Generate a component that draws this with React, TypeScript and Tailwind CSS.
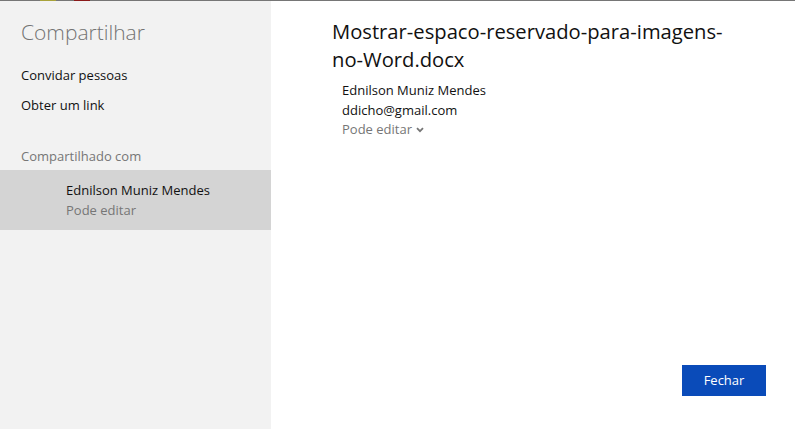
import React from "react";

export default function App() {
  const font = { fontFamily: '"Open Sans", "Noto Sans", sans-serif' };
  return (
    <div className="w-[795px] h-[429px] flex flex-col bg-white overflow-hidden" style={font}>
      <div className="h-px w-full flex bg-[#767676]">
        <div className="w-[40px]" />
        <div className="w-[16px] bg-[#a8a23a]" />
        <div className="w-[18px]" />
        <div className="w-[16px] bg-[#8a1a1a]" />
      </div>
      <div className="flex flex-1">
        <div className="w-[271px] bg-[#f2f2f2] flex flex-col">
          <div className="pl-[21px] pt-[15px] text-[21px] leading-[32px] text-[#737373] font-light">Compartilhar</div>
          <div className="pl-[21px] pt-[12px] text-[13px] leading-[30px] text-[#111]">
            <div>Convidar pessoas</div>
            <div>Obter um link</div>
          </div>
          <div className="pl-[21px] pt-[26px] pb-[4px] text-[13px] leading-[20px] text-[#767676]">Compartilhado com</div>
          <div className="h-[60px] bg-[#d4d4d4] pl-[66px] pt-[10px] text-[13px] leading-[20px]">
            <div className="text-[#111]">Ednilson Muniz Mendes</div>
            <div className="text-[#767676]">Pode editar</div>
          </div>
        </div>
        <div className="flex-1 flex flex-col pl-[61px] pr-[29px]">
          <div className="pt-[16px] text-[20.2px] leading-[28px] text-[#111] w-[400px] break-words">
            Mostrar-espaco-reservado-para-imagens-no-Word.docx
          </div>
          <div className="pl-[10px] pt-[8px] text-[13px] leading-[19.5px]">
            <div className="text-[#111]">Ednilson Muniz Mendes</div>
            <div className="text-[#111]">ddicho@gmail.com</div>
            <div className="text-[#767676] flex items-center gap-[4px]">
              Pode editar
              <svg width="8" height="6" viewBox="0 0 8 6" className="mt-[1px]">
                <path d="M1 1.2 L4 4.2 L7 1.2" fill="none" stroke="#767676" strokeWidth="1.8" />
              </svg>
            </div>
          </div>
          <div className="flex-1" />
          <div className="flex justify-end pb-[33px]">
            <button className="w-[84px] h-[31px] bg-[#0a4bb9] text-white text-[13px]">Fechar</button>
          </div>
        </div>
      </div>
    </div>
  );
}
